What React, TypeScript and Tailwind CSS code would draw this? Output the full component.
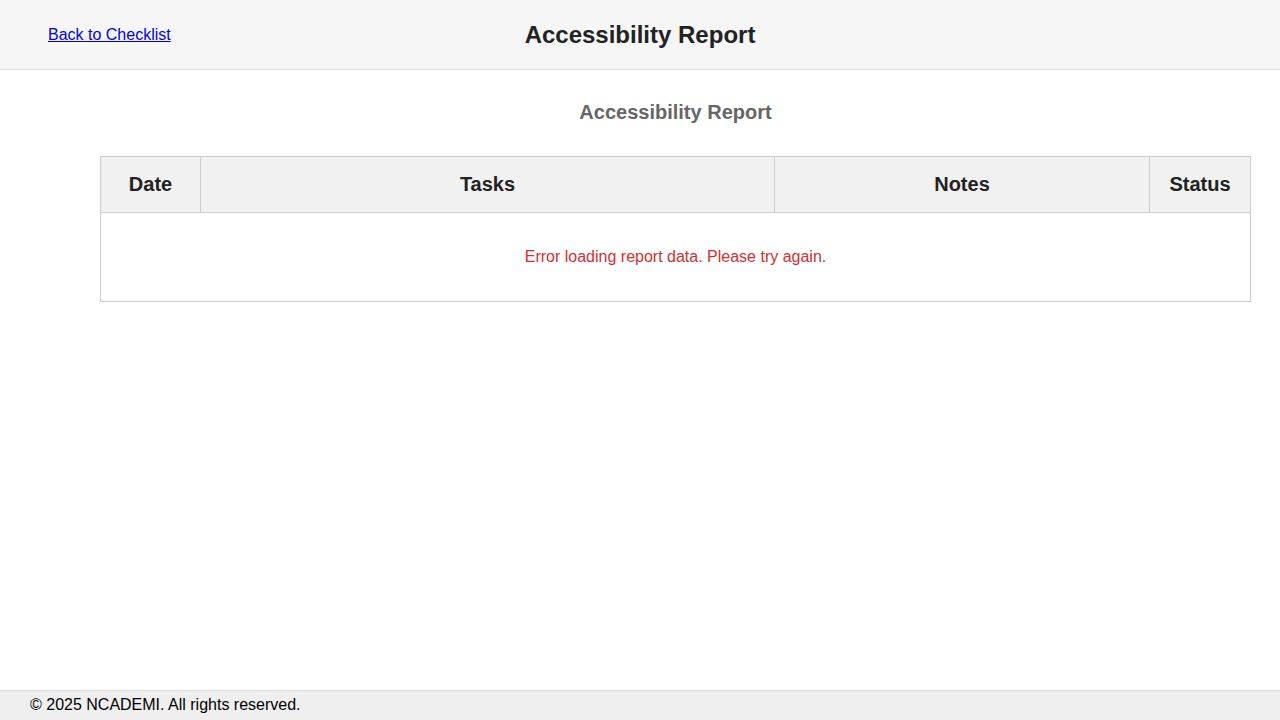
import React from "react";

const columns = [
  { label: "Date", width: "w-[100px]" },
  { label: "Tasks", width: "w-[574px]" },
  { label: "Notes", width: "w-[375px]" },
  { label: "Status", width: "w-[101px]" },
];

export default function App() {
  return (
    <div className="min-h-[720px] bg-white font-['Liberation_Sans',Arial,sans-serif] text-[#222]">
      <header className="grid h-[70px] grid-cols-[1fr_auto_1fr] items-center border-b border-[#ddd] bg-[#f6f6f6]">
        <div className="pl-12">
          <a href="#" className="text-base text-[#0000ee] underline">
            Back to Checklist
          </a>
        </div>
        <h1 className="text-2xl font-bold text-[#222]">Accessibility Report</h1>
        <div />
      </header>

      <main className="ml-[100px] mr-[29px] pt-[28px]">
        <h2 className="text-center text-xl font-bold leading-[28px] text-[#666]">
          Accessibility Report
        </h2>
        <table className="mt-[30px] w-[1151px] table-fixed border-collapse">
          <thead>
            <tr className="h-[56px] bg-[#f1f1f1]">
              {columns.map((col) => (
                <th
                  key={col.label}
                  className={`${col.width} border border-[#ccc] pb-[2px] text-center text-xl font-bold text-[#222]`}
                >
                  {col.label}
                </th>
              ))}
            </tr>
          </thead>
          <tbody>
            <tr className="h-[89px]">
              <td colSpan={4} className="border border-[#ccc] text-center text-base text-[#d32f2f]">
                Error loading report data. Please try again.
              </td>
            </tr>
          </tbody>
        </table>
      </main>

      <footer className="fixed inset-x-0 bottom-0 h-[30px] border-t border-[#ddd] bg-[#efefef] pl-[30px] text-base leading-[28px] text-black">
        © 2025 NCADEMI. All rights reserved.
      </footer>
    </div>
  );
}
